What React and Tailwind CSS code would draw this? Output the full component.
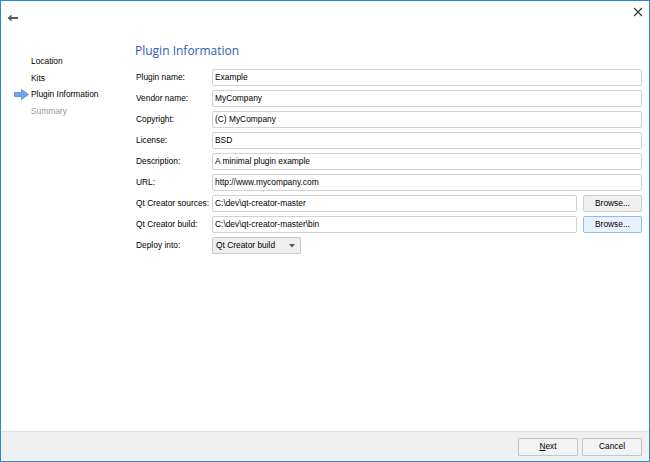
import React from "react";

const font = { fontFamily: '"Liberation Sans", Arial, sans-serif' };

function Field({ label, value, browse, focused }) {
  return (
    <div className="flex items-center h-[17px]">
      <div className="w-[76px] shrink-0 text-[8.4px] text-[#000] leading-none">{label}</div>
      <div className="flex-1 flex items-center gap-[6px] h-full">
        <div className="flex-1 h-full border border-[#d2d2d2] rounded-[2px] bg-white flex items-center px-[2px] text-[8.4px] leading-none text-black">
          {value}
        </div>
        {browse && (
          <div
            className={
              "w-[59px] h-full rounded-[2px] border flex items-center justify-center text-[8.4px] leading-none text-black " +
              (focused ? "border-[#8ec0ee] bg-[#e8f2fc]" : "border-[#cdcdcd] bg-[#efefef]")
            }
          >
            Browse...
          </div>
        )}
      </div>
    </div>
  );
}

export default function App() {
  return (
    <div
      style={font}
      className="w-[650px] h-[462px] border border-[#2a8ad8] bg-white flex flex-col overflow-hidden"
    >
      <div className="h-[33px] shrink-0 flex justify-between items-start">
        <svg width="12" height="8" viewBox="0 0 12 8" className="ml-[6px] mt-[13px]">
          <path d="M0.5 4 L4.5 0.5 L4.5 3 L11 3 L11 5 L4.5 5 L4.5 7.5 Z" fill="#5a5a5a" />
        </svg>
        <svg width="10" height="10" viewBox="0 0 10 10" className="mr-[6px] mt-[6px]">
          <path d="M1 1 L9 9 M9 1 L1 9" stroke="#333" strokeWidth="1.1" />
        </svg>
      </div>
      <div className="flex-1 flex min-h-0">
        <div className="w-[134px] shrink-0 pt-[19px] flex flex-col">
          {[
            ["Location", false, false],
            ["Kits", false, false],
            ["Plugin Information", true, false],
            ["Summary", false, true],
          ].map(([t, active, dim]) => (
            <div key={t} className="h-[16.5px] flex items-center">
              <div className="w-[30px] pl-[13px] flex items-center">
                {active && (
                  <svg width="15" height="11" viewBox="0 0 15 11">
                    <path
                      d="M0.5 3.5 H7.5 V0.5 L14.5 5.5 L7.5 10.5 V7.5 H0.5 Z"
                      fill="#6fa6ea"
                      stroke="#4d8ad8"
                      strokeWidth="0.8"
                    />
                  </svg>
                )}
              </div>
              <span className={"text-[8.4px] leading-none " + (dim ? "text-[#9a9a9a]" : "text-black")}>{t}</span>
            </div>
          ))}
        </div>
        <div className="flex-1 pr-[7px] pt-[9px] flex flex-col">
          <div
            className="h-[16px] flex items-center text-[12px] text-[#2e5bb3] leading-none"
            style={{ fontFamily: '"Open Sans", "Liberation Sans", sans-serif' }}
          >
            Plugin Information
          </div>
          <div className="mt-[10px] pl-[1px] flex flex-col gap-[4px]">
            <Field label="Plugin name:" value="Example" />
            <Field label="Vendor name:" value="MyCompany" />
            <Field label="Copyright:" value="(C) MyCompany" />
            <Field label="License:" value="BSD" />
            <Field label="Description:" value="A minimal plugin example" />
            <Field label="URL:" value="http://www.mycompany.com" />
            <Field label="Qt Creator sources:" value="C:\dev\qt-creator-master" browse />
            <Field label="Qt Creator build:" value="C:\dev\qt-creator-master\bin" browse focused />
            <div className="flex items-center h-[17px]">
              <div className="w-[76px] shrink-0 text-[8.4px] leading-none text-black">Deploy into:</div>
              <div className="w-[89px] h-full border border-[#cacaca] rounded-[1px] bg-[#efefef] flex items-center justify-between px-[3px] text-[8.4px] leading-none text-black">
                <span>Qt Creator build</span>
                <svg width="6" height="4" viewBox="0 0 6 4" className="mr-[2px]">
                  <path d="M0 0 H6 L3 3.5 Z" fill="#555" />
                </svg>
              </div>
            </div>
          </div>
        </div>
      </div>
      <div className="h-[30px] shrink-0 bg-[#f0f0f0] border-t border-[#dcdcdc] flex items-center justify-end gap-[4px] pr-[7px]">
        <div className="w-[60px] h-[18px] border border-[#c6c6c6] rounded-[1px] bg-[#f3f3f3] flex items-center justify-center text-[8.4px] leading-none text-black">
          <span>
            <span className="underline">N</span>ext
          </span>
        </div>
        <div className="w-[60px] h-[18px] border border-[#c6c6c6] rounded-[1px] bg-[#f3f3f3] flex items-center justify-center text-[8.4px] leading-none text-black">
          Cancel
        </div>
      </div>
    </div>
  );
}
